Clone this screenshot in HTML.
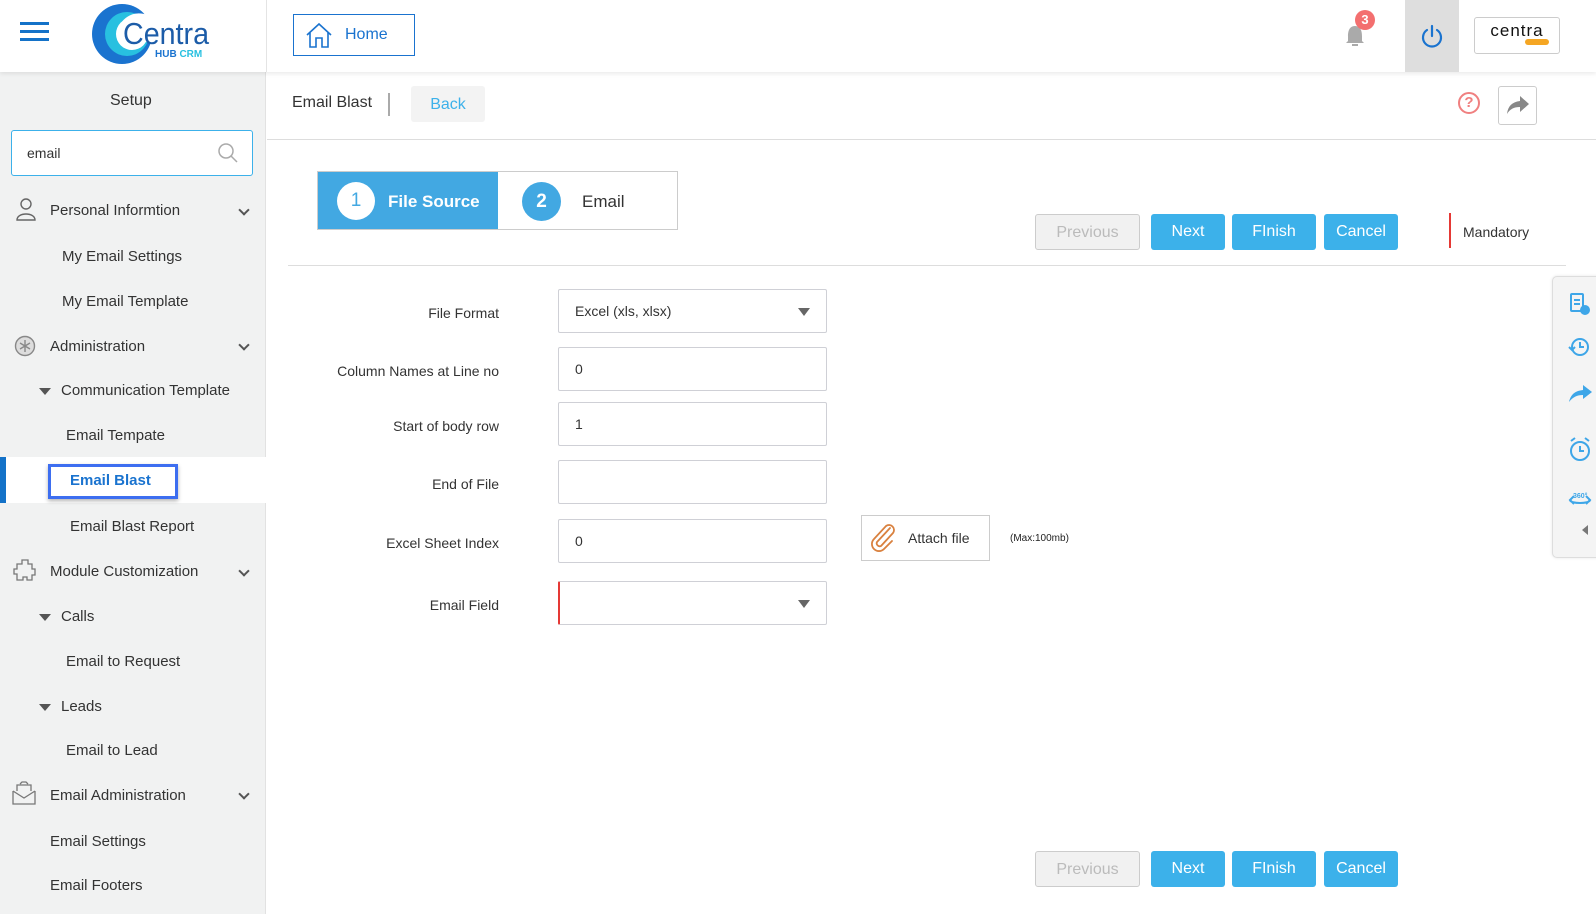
<!DOCTYPE html>
<html><head><meta charset="utf-8"><style>
*{box-sizing:border-box;margin:0;padding:0}
body{width:1596px;height:914px;overflow:hidden;background:#fff;font-family:"Liberation Sans",sans-serif;color:#333;position:relative}
.abs{position:absolute}
.side{left:0;top:72px;width:266px;height:842px;background:#f1f2f2;border-right:1px solid #e2e2e2}
.si{position:absolute;font-size:15px;color:#333;white-space:nowrap}
.chev{position:absolute;left:240px;width:8px;height:8px;border-right:2px solid #555;border-bottom:2px solid #555;transform:rotate(45deg)}
.tri{display:inline-block;width:0;height:0;border-left:6px solid transparent;border-right:6px solid transparent;border-top:7px solid #555;margin-right:10px;vertical-align:middle}
.lbl{position:absolute;right:1097px;font-size:14px;color:#333;text-align:right}
.inp{position:absolute;left:558px;width:269px;height:44px;border:1px solid #cfd0d6;border-radius:2px;font-size:14px;padding-left:16px;line-height:42px;color:#333}
.dd::after{content:"";position:absolute;right:16px;top:18px;border-left:6px solid transparent;border-right:6px solid transparent;border-top:8px solid #666}
.btn{position:absolute;height:36px;border-radius:3px;background:#3cb1ea;color:#fff;font-size:16px;text-align:center;line-height:36px}
.prev{background:#f1f1f1;border:1px solid #ccc;color:#bbb}
</style></head><body>
<div class="abs" style="left:0;top:0;width:1596px;height:72px;background:#fff;box-shadow:0 2px 4px rgba(0,0,0,.08);z-index:2">
 <div class="abs" style="left:20px;top:22px;width:29px;height:3px;background:#1472c8;box-shadow:0 8px 0 #1472c8,0 16px 0 #1472c8"></div>
 <svg class="abs" style="left:90px;top:2px" width="125" height="64" viewBox="0 0 125 64">
  <circle cx="32" cy="32" r="30" fill="#1a73cf"/><circle cx="37" cy="32" r="22" fill="#28c0e0"/><circle cx="42" cy="32" r="16" fill="#fff"/>
  <path d="M30 22 q12-16 30-8 q10-4 16 4 l-4 22 h-42z" fill="#fff"/>
  <text x="33" y="42" font-family="Liberation Sans" font-size="31" fill="#1c5ca8" textLength="86" lengthAdjust="spacingAndGlyphs">Centra</text>
  <text x="65" y="55" font-family="Liberation Sans" font-weight="bold" font-size="10" fill="#1a73cf">HUB <tspan fill="#28c0e0">CRM</tspan></text>
 </svg>
 <div class="abs" style="left:266px;top:0;width:1px;height:72px;background:#e4e4e4"></div>
 <div class="abs" style="left:293px;top:14px;width:122px;height:42px;border:1px solid #1a73cf;color:#1a73cf;font-size:16px;line-height:40px;padding-left:51px">Home</div>
 <svg class="abs" style="left:305px;top:22px" width="28" height="26" viewBox="0 0 28 26" fill="none" stroke="#1a73cf" stroke-width="1.6"><path d="M2 13 L14 2 L26 13 M5 10 V25 H11 V16 H17 V25 H23 V10"/></svg>
 <svg class="abs" style="left:1344px;top:24px" width="22" height="24" viewBox="0 0 22 24"><path d="M11 2 C5 2 4 8 4 12 V17 L2 19 H20 L18 17 V12 C18 8 17 2 11 2Z M8 20 h6 v2 h-6z" fill="#aaa"/></svg>
 <div class="abs" style="left:1355px;top:10px;width:20px;height:20px;border-radius:50%;background:#f36f6f;color:#fff;font-size:13px;font-weight:bold;text-align:center;line-height:20px">3</div>
 <div class="abs" style="left:1405px;top:0;width:54px;height:72px;background:#dedede"></div>
 <svg class="abs" style="left:1420px;top:24px" width="24" height="24" viewBox="0 0 24 24" fill="none" stroke="#1a73cf" stroke-width="2.2" stroke-linecap="round"><path d="M7 6 A9 9 0 1 0 17 6"/><path d="M12 2 V12"/></svg>
 <div class="abs" style="left:1474px;top:17px;width:86px;height:37px;border:1px solid #ccc;border-radius:3px;text-align:center;font-size:17px;color:#111;line-height:26px;letter-spacing:1px">centra</div>
 <div class="abs" style="left:1525px;top:39px;width:24px;height:6px;background:#f5a623;border-radius:3px"></div>
</div>
<div class="abs side">
 <div class="si" style="left:110px;top:20px;font-size:16px">Setup</div>
 <div class="abs" style="left:11px;top:58px;width:242px;height:46px;border:1px solid #3cb1ea;border-radius:3px;background:#fff;font-size:14px;line-height:44px;padding-left:15px">email</div>
 <svg class="abs" style="left:217px;top:70px" width="22" height="22" viewBox="0 0 22 22" fill="none" stroke="#aaa" stroke-width="1.5"><circle cx="9" cy="9" r="7"/><path d="M14 14 L20 20"/></svg>
</div>
<svg class="abs" style="left:15px;top:197px" width="22" height="24" viewBox="0 0 22 24" fill="none" stroke="#666" stroke-width="1.4"><circle cx="11" cy="7" r="5"/><path d="M2 23 C2 15 20 15 20 23Z"/></svg>
<div class="si" style="left:50px;top:202px">Personal Informtion</div><div class="chev" style="top:206px"></div>
<div class="si" style="left:62px;top:248px">My Email Settings</div>
<div class="si" style="left:62px;top:293px">My Email Template</div>
<svg class="abs" style="left:14px;top:335px" width="22" height="22" viewBox="0 0 22 22" fill="none" stroke="#888" stroke-width="1.4"><circle cx="11" cy="11" r="9.5" fill="#ddd"/><path d="M11 5 V17 M6 8 L16 14 M16 8 L6 14"/></svg>
<div class="si" style="left:50px;top:338px">Administration</div><div class="chev" style="top:341px"></div>
<div class="si" style="left:39px;top:382px"><span class="tri"></span>Communication Template</div>
<div class="si" style="left:66px;top:427px">Email Tempate</div>
<div class="abs" style="left:0;top:457px;width:266px;height:46px;background:#fff"></div>
<div class="abs" style="left:0;top:457px;width:6px;height:46px;background:#1472c8"></div>
<div class="abs" style="left:48px;top:464px;width:130px;height:35px;border:3px solid #3d6ef0;box-shadow:0 2px 4px rgba(0,0,0,.3)"></div>
<div class="si" style="left:70px;top:472px;color:#1a73cf;font-weight:bold">Email Blast</div>
<div class="si" style="left:70px;top:518px">Email Blast Report</div>
<svg class="abs" style="left:13px;top:558px" width="24" height="24" viewBox="0 0 24 24" fill="none" stroke="#777" stroke-width="1.3"><path d="M9 2 h6 v4 h4 v5 h3 v6 h-3 v5 h-5 v-3 h-4 v3 h-6 v-6 h-3 v-5 h3 v-5 h5z"/></svg>
<div class="si" style="left:50px;top:563px">Module Customization</div><div class="chev" style="top:567px"></div>
<div class="si" style="left:39px;top:608px"><span class="tri"></span>Calls</div>
<div class="si" style="left:66px;top:653px">Email to Request</div>
<div class="si" style="left:39px;top:698px"><span class="tri"></span>Leads</div>
<div class="si" style="left:66px;top:742px">Email to Lead</div>
<svg class="abs" style="left:12px;top:781px" width="24" height="24" viewBox="0 0 24 24" fill="none" stroke="#777" stroke-width="1.3"><path d="M1 10 V23 H23 V10 M1 10 L12 17 L23 10 M5 10 V4 H19 V10 M8 3 L10 1 L14 1 L16 3"/></svg>
<div class="si" style="left:50px;top:787px">Email Administration</div><div class="chev" style="top:790px"></div>
<div class="si" style="left:50px;top:833px">Email Settings</div>
<div class="si" style="left:50px;top:877px">Email Footers</div>
<div class="abs" style="left:292px;top:94px;font-size:16px">Email Blast</div>
<div class="abs" style="left:388px;top:93px;width:2px;height:23px;background:#aaa"></div>
<div class="abs" style="left:411px;top:86px;width:74px;height:36px;background:#f3f3f3;border-radius:3px;color:#3cb1ea;font-size:16px;text-align:center;line-height:38px">Back</div>
<div class="abs" style="left:1458px;top:92px;width:22px;height:22px;border:2px solid #f08080;border-radius:50%;color:#f08080;font-size:15px;font-weight:bold;text-align:center;line-height:18px">?</div>
<div class="abs" style="left:1498px;top:86px;width:39px;height:39px;border:1px solid #ccc;border-radius:3px"></div>
<svg class="abs" style="left:1506px;top:94px" width="24" height="22" viewBox="0 0 24 22"><path d="M14 2 L23 10 L14 18 V13 C8 13 4 15 1 20 C2 12 6 8 14 7Z" fill="#888"/></svg>
<div class="abs" style="left:267px;top:139px;width:1329px;height:1px;background:#ddd"></div>
<div class="abs" style="left:317px;top:171px;width:361px;height:59px;border:1px solid #ccc"></div>
<div class="abs" style="left:318px;top:172px;width:180px;height:57px;background:#42a8e2"></div>
<div class="abs" style="left:337px;top:182px;width:38px;height:38px;border-radius:50%;background:#fff;color:#42a8e2;font-size:19px;text-align:center;line-height:38px">1</div>
<div class="abs" style="left:388px;top:192px;color:#fff;font-size:17px;font-weight:bold">File Source</div>
<div class="abs" style="left:522px;top:182px;width:39px;height:39px;border-radius:50%;background:#42a8e2;color:#fff;font-size:19px;font-weight:bold;text-align:center;line-height:39px">2</div>
<div class="abs" style="left:582px;top:192px;font-size:17px">Email</div>
<div class="btn prev" style="left:1035px;top:214px;width:105px">Previous</div>
<div class="btn" style="left:1151px;top:214px;width:74px">Next</div>
<div class="btn" style="left:1232px;top:214px;width:84px">FInish</div>
<div class="btn" style="left:1324px;top:214px;width:74px">Cancel</div>
<div class="abs" style="left:1449px;top:213px;width:2px;height:35px;background:#e53935"></div>
<div class="abs" style="left:1463px;top:224px;font-size:14px">Mandatory</div>
<div class="abs" style="left:288px;top:265px;width:1278px;height:1px;background:#ddd"></div>
<div class="lbl" style="top:305px">File Format</div><div class="inp dd" style="top:289px">Excel (xls, xlsx)</div>
<div class="lbl" style="top:363px">Column Names at Line no</div><div class="inp" style="top:347px">0</div>
<div class="lbl" style="top:418px">Start of body row</div><div class="inp" style="top:402px">1</div>
<div class="lbl" style="top:476px">End of File</div><div class="inp" style="top:460px"></div>
<div class="lbl" style="top:535px">Excel Sheet Index</div><div class="inp" style="top:519px">0</div>
<div class="lbl" style="top:597px">Email Field</div><div class="inp dd" style="top:581px;border-left:2px solid #e53935"></div>
<div class="abs" style="left:861px;top:515px;width:129px;height:46px;border:1px solid #ccc;font-size:14px;line-height:44px;padding-left:46px">Attach file</div>
<svg class="abs" style="left:870px;top:524px" width="26" height="28" viewBox="0 0 26 28" fill="none" stroke="#d9813f" stroke-width="1.8" stroke-linecap="round"><path d="M20 4 L7 18 a3 3 0 0 0 4 4 L23 9 a5 5 0 0 0 -7 -7 L4 15 a7 7 0 0 0 10 10 L22 17"/></svg>
<div class="abs" style="left:1010px;top:533px;font-size:10px;color:#222">(Max:100mb)</div>
<div class="abs" style="left:1552px;top:276px;width:50px;height:282px;background:#f4f4f4;border:1px solid #ddd;border-radius:5px;box-shadow:0 0 3px rgba(0,0,0,.1)"></div>
<svg class="abs" style="left:1566px;top:290px" width="28" height="260" viewBox="0 0 28 260" fill="none" stroke="#3ea6e8" stroke-width="2">
 <rect x="5" y="4" width="12" height="17" rx="1"/><path d="M8 10h6M8 14h6"/><circle cx="19" cy="20" r="4" fill="#3ea6e8"/>
 <circle cx="14" cy="57" r="8"/><path d="M14 52v5h4M3 57l3 3 3-3"/>
 <path d="M17 95 l9 7 -9 7 v-4 c-6 0 -10 2 -14 7 c2-8 6-11 14-12z" fill="#3ea6e8" stroke="none"/>
 <circle cx="14" cy="161" r="9"/><path d="M14 156v5h4M5 151l4-3M23 151l-4-3"/>
 <path d="M4 210 c0 4 20 4 20 0 M20 206 l4 4 -4 4 M8 214 l-4-4 4-4"/>
 <path d="M22 235 l-6 5 6 5z" fill="#777" stroke="none"/>
</svg>
<div class="abs" style="left:1573px;top:493px;font-size:7px;color:#3ea6e8;font-weight:bold">360°</div>
<div class="btn prev" style="left:1035px;top:851px;width:105px">Previous</div>
<div class="btn" style="left:1151px;top:851px;width:74px">Next</div>
<div class="btn" style="left:1232px;top:851px;width:84px">FInish</div>
<div class="btn" style="left:1324px;top:851px;width:74px">Cancel</div>
</body></html>
